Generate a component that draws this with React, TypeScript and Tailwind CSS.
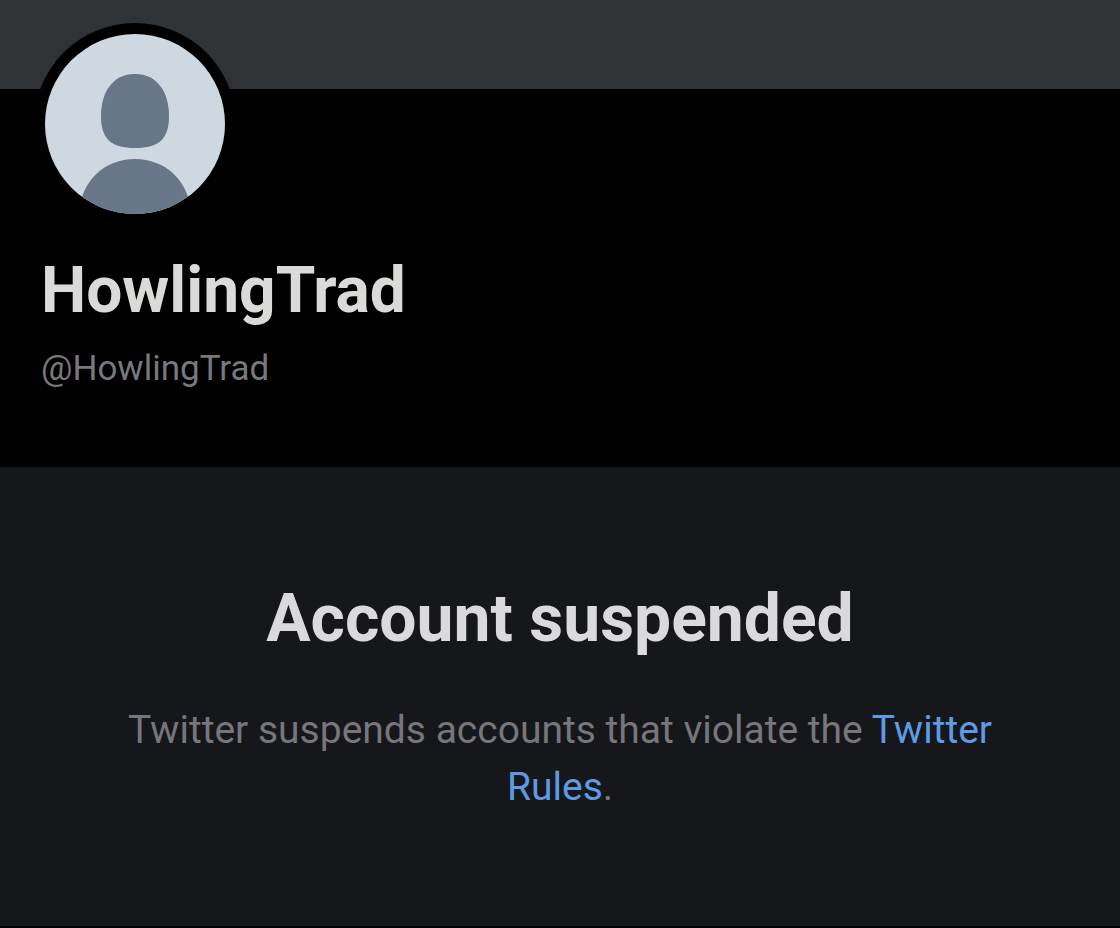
export default function App() {
  return (
    <main className="flex min-h-screen flex-col bg-black font-['Roboto',sans-serif]">
      <div className="h-[89px] bg-[#2f3336]" />
      <header className="-mt-[66px] flex flex-col items-start px-[34px] pb-[74px]">
        <svg viewBox="0 0 202 202" className="h-[202px] w-[202px]" role="img" aria-label="Default profile picture">
          <defs>
            <clipPath id="face">
              <circle cx="101" cy="101" r="90" />
            </clipPath>
          </defs>
          <circle cx="101" cy="101" r="101" fill="#000" />
          <circle cx="101" cy="101" r="90" fill="#ced8e1" />
          <g clipPath="url(#face)" fill="#687787">
            <path d="M101 51c23 0 34 19 34 42 0 23-10 32-34 32s-34-9-34-32c0-23 11-42 34-42Z" />
            <path d="M45 194c0-35 25-58 56-58s56 23 56 58Z" />
          </g>
        </svg>
        <h1 className="mt-[32px] pl-[7px] text-[64px] leading-[68px] font-bold text-[#dadad8]">HowlingTrad</h1>
        <p className="mt-[20px] pl-[7px] text-[35px] leading-[48px] text-[#77797d]">@HowlingTrad</p>
      </header>
      <section className="flex grow flex-col items-center border-b-2 border-black bg-[#16171b] px-[100px] pt-[114px] text-center">
        <h2 className="text-[66px] leading-[76px] font-bold text-[#dadadc]">Account suspended</h2>
        <p className="mt-[45px] text-[39px] leading-[57px] text-[#77767b]">
          Twitter suspends accounts that violate the <a href="#rules" className="text-[#5f9be4]">Twitter Rules</a>.
        </p>
      </section>
    </main>
  );
}
